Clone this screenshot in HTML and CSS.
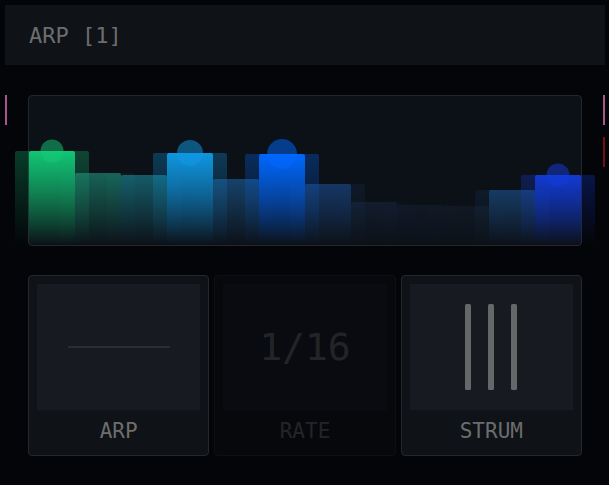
FILE: index.html
```
<!DOCTYPE html>
<html lang="en">
<head>
    <meta charset="UTF-8" />
    <meta name="viewport" content="width=device-width, initial-scale=1" />
    <title>ARP [1]</title>
    <link rel="stylesheet" href="styles.css">
</head>
<body>

<header class="title-bar">
  <h1>ARP [1]</h1>
</header>

<main>
  <section class="spectrum-row">
    <div class="markers"><span class="marker"></span></div>
    <div class="spectrum" id="spectrum"></div>
    <div class="markers"><span class="marker"></span><span class="marker red"></span></div>
  </section>

  <section class="pads">
    <button class="pad" type="button">
      <span class="screen"><span class="flat-line"></span></span>
      <span class="name">ARP</span>
    </button>
    <button class="pad off" type="button" disabled>
      <span class="screen"><span class="value">1/16</span></span>
      <span class="name">RATE</span>
    </button>
    <button class="pad" type="button">
      <span class="screen">
        <svg class="strum" viewBox="0 0 52 86" aria-hidden="true">
          <rect x="0" y="0" width="6" height="86" rx="1.5"/>
          <rect x="23" y="0" width="6" height="86" rx="1.5"/>
          <rect x="46" y="0" width="6" height="86" rx="1.5"/>
        </svg>
      </span>
      <span class="name">STRUM</span>
    </button>
  </section>
</main>

<script>
// one entry per note: level in %, colour, bar opacity, glow opacity, dot size
const notes = [
  { level: 63, color: '#12cb78', bar: 0.95, glow: 0.28, dot: 23 },
  { level: 48, color: '#1f9c80', bar: 0.56, glow: 0.06 },
  { level: 47, color: '#1c8fa0', bar: 0.56, glow: 0.06 },
  { level: 62, color: '#0f9ae6', bar: 0.95, glow: 0.3, dot: 26 },
  { level: 44, color: '#2072b8', bar: 0.5, glow: 0.02 },
  { level: 61, color: '#0068ff', bar: 0.98, glow: 0.3, dot: 30 },
  { level: 41, color: '#2060b8', bar: 0.42, glow: 0.1 },
  { level: 29, color: '#2a4a80', bar: 0.18, glow: 0.02 },
  { level: 27, color: '#2a4a80', bar: 0.12, glow: 0.02 },
  { level: 26, color: '#2a4a70', bar: 0.12, glow: 0.02 },
  { level: 37, color: '#2060a8', bar: 0.46, glow: 0.12 },
  { level: 47, color: '#123cdc', bar: 0.92, glow: 0.3, dot: 23 }
];

const spectrum = document.getElementById('spectrum');
notes.forEach(n => {
  const dot = n.dot ? `<span class="dot" style="width:${n.dot}px"></span>` : '';
  spectrum.innerHTML += `<div class="note" style="height:${n.level}%;color:${n.color}">
    <span class="glow" style="opacity:${n.glow}"></span>
    <span class="bar" style="opacity:${n.bar}"></span>${dot}
  </div>`;
});
</script>
</body>
</html>
```
FILE: styles.css
```
* {
  box-sizing: border-box;
}
body {
  margin: 0;
  padding: 5px 4px 24px 5px;
  background-color: #040509;
  color: #6c6d6e;
  font-family: "DejaVu Sans Mono", monospace;
}
.title-bar {
  display: flex;
  align-items: center;
  height: 60px;
  padding: 2px 24px 0;
  background-color: #0f1216;
}
h1 {
  margin: 0;
  font-size: 22px;
  line-height: 28px;
  font-weight: normal;
}

/* note levels */
.spectrum-row {
  display: flex;
  margin-top: 30px;
  height: 151px;
}
.markers {
  display: flex;
  flex-direction: column;
  gap: 12px;
  width: 23px;
}
.marker {
  width: 2px;
  height: 30px;
  background-color: #a8568c;
}
.markers:last-child {
  align-items: flex-end;
}
.marker.red {
  background-color: #6f1015;
}
.spectrum {
  flex: 1;
  display: grid;
  grid-template-columns: repeat(12, 1fr);
  align-items: end;
  border: 1px solid #23272c;
  border-radius: 4px;
  background-color: #0c1118;
}
.note {
  position: relative;
}
.bar, .glow {
  position: absolute;
  top: 0;
  bottom: 0;
  left: 0;
  right: 0;
  border-radius: 2px 2px 0 0;
  background: linear-gradient(currentColor, transparent);
}
.glow {
  left: -14px;
  right: -14px;
}
.dot {
  position: absolute;
  top: 0;
  left: 50%;
  aspect-ratio: 1;
  border-radius: 50%;
  background-color: currentColor;
  opacity: 0.5;
  transform: translate(-50%, -50%);
}

/* pads */
.pads {
  display: grid;
  grid-template-columns: repeat(3, 1fr);
  gap: 5px;
  margin: 29px 23px 0;
}
.pad {
  display: flex;
  flex-direction: column;
  height: 181px;
  padding: 8px;
  border: 1px solid #24282d;
  border-radius: 4px;
  background-color: #0f1216;
  color: inherit;
  font: inherit;
}
.pad.off {
  opacity: 0.3;
}
.screen {
  display: flex;
  align-items: center;
  justify-content: center;
  width: 100%;
  height: 126px;
  background-color: #171a21;
}
.name {
  width: 100%;
  margin-top: 9px;
  font-size: 21px;
  line-height: 24px;
  text-align: center;
}
.value {
  font-size: 38px;
  line-height: 48px;
}
.flat-line {
  width: 102px;
  height: 2px;
  background-color: #2a2d33;
}
.strum {
  height: 86px;
  fill: #666768;
}
```
